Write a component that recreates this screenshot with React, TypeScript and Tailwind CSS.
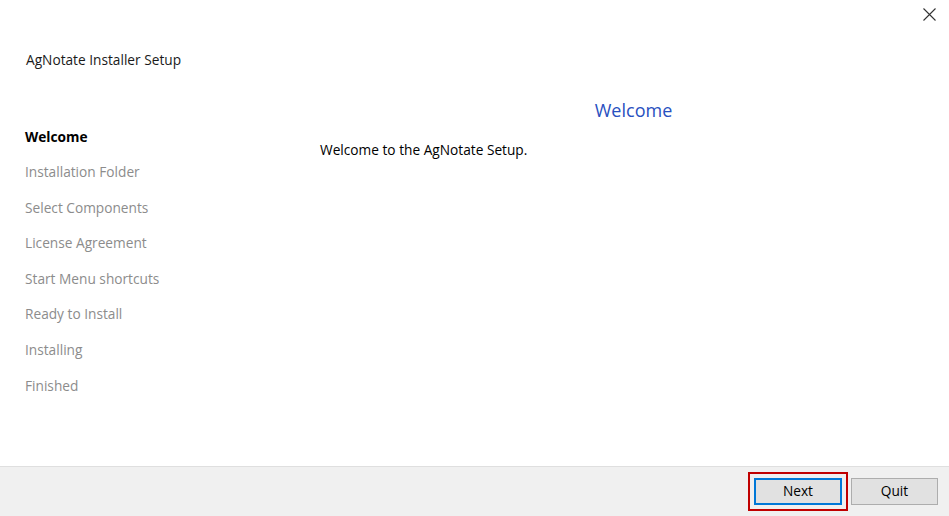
import React from "react";

const steps = [
  "Welcome",
  "Installation Folder",
  "Select Components",
  "License Agreement",
  "Start Menu shortcuts",
  "Ready to Install",
  "Installing",
  "Finished",
];

export default function App() {
  return (
    <div
      className="w-[949px] h-[516px] bg-white flex flex-col overflow-hidden"
      style={{ fontFamily: '"Open Sans", "Noto Sans", Arial, sans-serif' }}
    >
      <div className="flex-1 flex flex-col">
        <div className="h-[30px] flex justify-end items-start pt-[8px] pr-[13px]">
          <svg width="13" height="13" viewBox="0 0 13 13" className="text-[#333]">
            <path d="M0.5 0.5 L12.5 12.5 M12.5 0.5 L0.5 12.5" stroke="currentColor" strokeWidth="1.1" fill="none" />
          </svg>
        </div>
        <div className="mt-[20px] pl-[26px] h-[20px] leading-[20px] text-[13.7px] text-[#1a1a1a]">
          AgNotate Installer Setup
        </div>
        <div className="flex flex-1">
          <div className="w-[320px] pl-[25px] pt-[49px] flex flex-col">
            {steps.map((s, i) => (
              <div
                key={s}
                className={`h-[35.6px] flex items-center text-[13.7px] ${
                  i === 0 ? "font-bold text-black" : "text-[#8c8c8c]"
                }`}
              >
                {s}
              </div>
            ))}
          </div>
          <div className="flex-1 pt-[27px] pr-[2px] flex flex-col">
            <div className="text-center leading-[26px] text-[18px] text-[#2850c0]">Welcome</div>
            <div className="mt-[17px] leading-[20px] text-[13.7px] text-black">
              Welcome to the AgNotate Setup.
            </div>
          </div>
        </div>
      </div>
      <div className="h-[50px] bg-[#f0f0f0] border-t border-[#dfdfdf] flex items-center justify-end pr-[11px]">
        <div className="border-2 border-[#c00000] p-[4px]">
          <div className="w-[88px] h-[27px] bg-[#e1e1e1] border-2 border-[#0078d7] flex items-center justify-center text-[13.7px] text-black">
            Next
          </div>
        </div>
        <div className="ml-[3px] w-[87px] h-[27px] bg-[#e1e1e1] border border-[#adadad] flex items-center justify-center text-[13.7px] text-black">
          Quit
        </div>
      </div>
    </div>
  );
}
